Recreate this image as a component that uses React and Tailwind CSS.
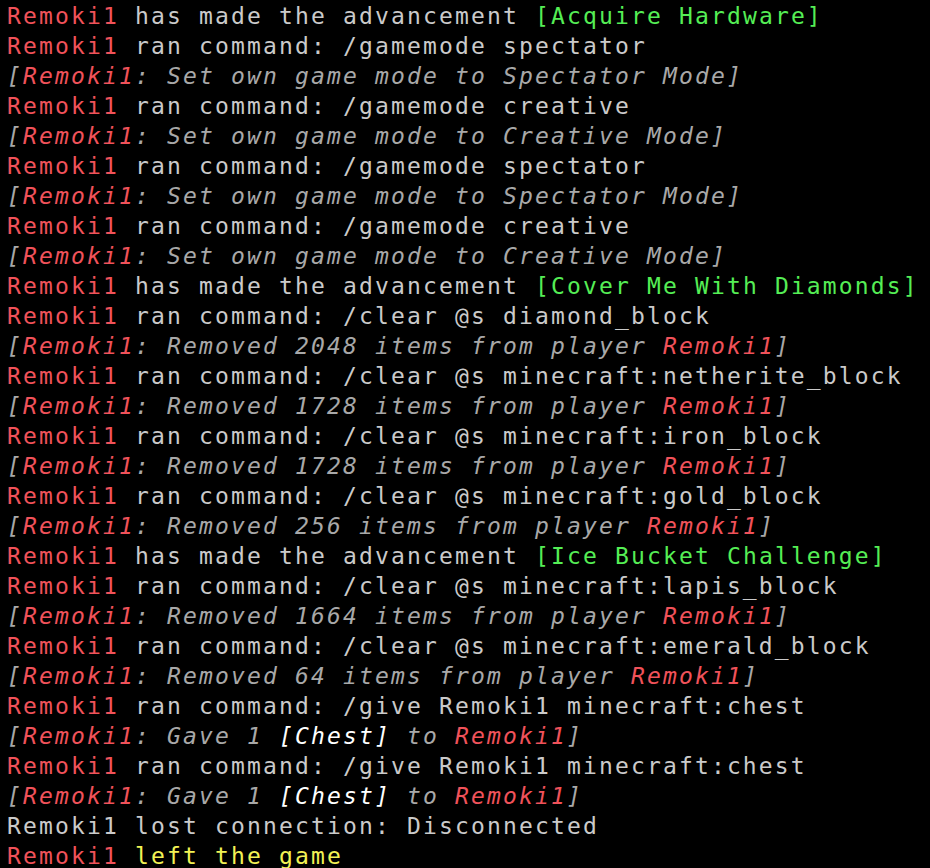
import React from "react";

const C = {
  r: "text-[#f0525a]",
  g: "text-[#cacaca]",
  i: "text-[#a8a8a8] italic",
  ir: "text-[#f0525a] italic",
  gr: "text-[#55ee55]",
  y: "text-[#f2f255]",
  w: "text-[#ffffff] italic",
};

const ran = (cmd) => [["r", "Remoki1"], ["g", " ran command: " + cmd]];
const adv = (name) => [["r", "Remoki1"], ["g", " has made the advancement "], ["gr", "[" + name + "]"]];
const setMode = (m) => [["i", "["], ["ir", "Remoki1"], ["i", ": Set own game mode to " + m + " Mode]"]];
const removed = (n) => [["i", "["], ["ir", "Remoki1"], ["i", ": Removed " + n + " items from player "], ["ir", "Remoki1"], ["i", "]"]];
const gave = () => [["i", "["], ["ir", "Remoki1"], ["i", ": Gave 1 "], ["w", "[Chest]"], ["i", " to "], ["ir", "Remoki1"], ["i", "]"]];

const lines = [
  adv("Acquire Hardware"),
  ran("/gamemode spectator"),
  setMode("Spectator"),
  ran("/gamemode creative"),
  setMode("Creative"),
  ran("/gamemode spectator"),
  setMode("Spectator"),
  ran("/gamemode creative"),
  setMode("Creative"),
  adv("Cover Me With Diamonds"),
  ran("/clear @s diamond_block"),
  removed("2048"),
  ran("/clear @s minecraft:netherite_block"),
  removed("1728"),
  ran("/clear @s minecraft:iron_block"),
  removed("1728"),
  ran("/clear @s minecraft:gold_block"),
  removed("256"),
  adv("Ice Bucket Challenge"),
  ran("/clear @s minecraft:lapis_block"),
  removed("1664"),
  ran("/clear @s minecraft:emerald_block"),
  removed("64"),
  ran("/give Remoki1 minecraft:chest"),
  gave(),
  ran("/give Remoki1 minecraft:chest"),
  gave(),
  [["g", "Remoki1 lost connection: Disconnected"]],
  [["r", "Remoki1"], ["y", " left the game"]],
];

export default function App() {
  return (
    <div
      className="w-[930px] h-[868px] overflow-hidden bg-black pl-[7px] pt-[1px] text-[23px] leading-[30px] tracking-[2.15px]"
      style={{ fontFamily: '"DejaVu Sans Mono", "Liberation Mono", monospace' }}
    >
      {lines.map((segs, li) => (
        <div key={li} className="whitespace-pre h-[30px]">
          {segs.map(([c, t], si) => (
            <span key={si} className={C[c]}>
              {t}
            </span>
          ))}
        </div>
      ))}
    </div>
  );
}
